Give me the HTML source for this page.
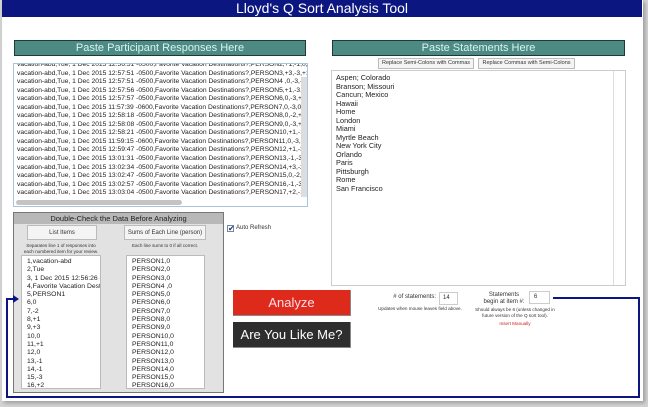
<!DOCTYPE html>
<html><head><meta charset="utf-8"><style>
*{margin:0;padding:0;box-sizing:border-box}
body{width:648px;height:407px;background:#d4d4d4;position:relative;overflow:hidden;font-family:"Liberation Sans",sans-serif}
.a{position:absolute}
.page{left:2px;top:0;width:641px;height:401px;background:#fff;box-shadow:2px 2px 4px #999}
.title{left:2px;top:0;width:640px;height:17px;background:#0c1680;color:#fff;font-size:14px;text-align:center;line-height:17px}
.hdr{background:#4e8a84;border:1px solid #1e3a36;color:#d8f4f0;font-size:11px;text-align:center;line-height:14px}
.ta{background:#fff;overflow:hidden}
.ln{font-size:6.7px;line-height:8.55px;white-space:nowrap;color:#222}
.st{font-size:7.3px;line-height:8.5px;color:#222}
.btn{background:#f4f4f4;border:1px solid #bbb;font-size:5.5px;text-align:center;color:#333}
.lst{font-size:6.8px;line-height:8.3px;color:#222;background:#fff;border:1px solid #bbb;overflow:hidden;padding:2px 0 0 5px;white-space:nowrap}
.sm{font-size:4.6px;color:#333;text-align:center;line-height:6px}
</style></head><body>
<div class="a page"></div>
<div class="a title">Lloyd's Q Sort Analysis Tool</div>

<div class="a hdr" style="left:14px;top:40px;width:292px;height:16px">Paste Participant Responses Here</div>
<div class="a ta" style="left:13px;top:63px;width:295px;height:144px;border:1px solid #a8c4de">
<div class="a ln" style="left:3px;top:-3px">vacation-abd,Tue, 1 Dec 2015 12:56:51 -0500,Favorite Vacation Destinations?,PERSON2,+1,-1,0,+<br>vacation-abd,Tue, 1 Dec 2015 12:57:51 -0500,Favorite Vacation Destinations?,PERSON3,+3,-3,+1<br>vacation-abd,Tue, 1 Dec 2015 12:57:51 -0500,Favorite Vacation Destinations?,PERSON4 ,0,-3,-1,+<br>vacation-abd,Tue, 1 Dec 2015 12:57:56 -0500,Favorite Vacation Destinations?,PERSON5,+1,-3,+3<br>vacation-abd,Tue, 1 Dec 2015 12:57:57 -0500,Favorite Vacation Destinations?,PERSON6,0,-3,+1,+<br>vacation-abd,Tue, 1 Dec 2015 11:57:39 -0600,Favorite Vacation Destinations?,PERSON7,0,-3,0,+2<br>vacation-abd,Tue, 1 Dec 2015 12:58:18 -0500,Favorite Vacation Destinations?,PERSON8,0,-2,+1,+<br>vacation-abd,Tue, 1 Dec 2015 12:58:08 -0500,Favorite Vacation Destinations?,PERSON9,0,-3,+2,+<br>vacation-abd,Tue, 1 Dec 2015 12:58:21 -0500,Favorite Vacation Destinations?,PERSON10,+1,-1,0<br>vacation-abd,Tue, 1 Dec 2015 11:59:15 -0600,Favorite Vacation Destinations?,PERSON11,0,-3,0,0<br>vacation-abd,Tue, 1 Dec 2015 12:59:47 -0500,Favorite Vacation Destinations?,PERSON12,+1,-3,0<br>vacation-abd,Tue, 1 Dec 2015 13:01:31 -0500,Favorite Vacation Destinations?,PERSON13,-1,-3,+<br>vacation-abd,Tue, 1 Dec 2015 13:02:34 -0500,Favorite Vacation Destinations?,PERSON14,+3,-2,0<br>vacation-abd,Tue, 1 Dec 2015 13:02:47 -0500,Favorite Vacation Destinations?,PERSON15,0,-2,+1<br>vacation-abd,Tue, 1 Dec 2015 13:02:57 -0500,Favorite Vacation Destinations?,PERSON16,-1,-3,+<br>vacation-abd,Tue, 1 Dec 2015 13:03:04 -0500,Favorite Vacation Destinations?,PERSON17,+2,-1,0</div>
<div class="a" style="left:287px;top:13px;width:6px;height:120px;background:#ddd"></div>
<div class="a" style="left:2px;top:136px;width:166px;height:5px;background:#c4c4c4;border-radius:3px"></div>
</div>

<div class="a hdr" style="left:332px;top:40px;width:293px;height:16px">Paste Statements Here</div>
<div class="a btn" style="left:378px;top:58px;width:96px;height:11px;line-height:9px">Replace Semi-Colons with Commas</div>
<div class="a btn" style="left:478px;top:58px;width:97px;height:11px;line-height:9px">Replace Commas with Semi-Colons</div>
<div class="a ta" style="left:331px;top:70px;width:295px;height:216px;border:1px solid #ccc">
<div class="a st" style="left:4px;top:3px">Aspen; Colorado<br>Branson; Missouri<br>Cancun; Mexico<br>Hawaii<br>Home<br>London<br>Miami<br>Myrtle Beach<br>New York City<br>Orlando<br>Paris<br>Pittsburgh<br>Rome<br>San Francisco</div>
<div class="a" style="left:281px;top:0;width:8px;height:214px;border-left:1px solid #ddd"></div>
</div>

<div class="a" style="left:13px;top:212px;width:211px;height:181px;background:#e2e2e2;border:1px solid #777"></div>
<div class="a" style="left:14px;top:213px;width:209px;height:11px;background:#b8b8b8;font-size:7.5px;text-align:center;line-height:11px;color:#222">Double-Check the Data Before Analyzing</div>
<div class="a btn" style="left:27px;top:225px;width:70px;height:15px;line-height:14px;font-size:6px">List Items</div>
<div class="a btn" style="left:124px;top:225px;width:82px;height:15px;line-height:14px;font-size:6px">Sums of Each Line (person)</div>
<div class="a sm" style="left:20px;top:243px;width:82px">Separates line 1 of responses into<br>each numbered item for your review.</div>
<div class="a sm" style="left:124px;top:243px;width:82px">Each line sums to 0 if all correct.</div>
<div class="a lst" style="left:21px;top:255px;width:80px;height:134px">1,vacation-abd<br>2,Tue<br>3, 1 Dec 2015 12:56:26 -0<br>4,Favorite Vacation Destir<br>5,PERSON1<br>6,0<br>7,-2<br>8,+1<br>9,+3<br>10,0<br>11,+1<br>12,0<br>13,-1<br>14,-1<br>15,-3<br>16,+2<br>17,-1</div>
<div class="a lst" style="left:126px;top:255px;width:79px;height:134px">PERSON1,0<br>PERSON2,0<br>PERSON3,0<br>PERSON4 ,0<br>PERSON5,0<br>PERSON6,0<br>PERSON7,0<br>PERSON8,0<br>PERSON9,0<br>PERSON10,0<br>PERSON11,0<br>PERSON12,0<br>PERSON13,0<br>PERSON14,0<br>PERSON15,0<br>PERSON16,0<br>PERSON17,0</div>

<div class="a" style="left:227px;top:225px;width:7px;height:7px;border:1px solid #789;background:#fff;font-size:8px;line-height:6px;color:#1a3a8a">✔</div>
<div class="a" style="left:236px;top:225px;font-size:6px;color:#333">Auto Refresh</div>

<div class="a" style="left:233px;top:290px;width:118px;height:26px;background:#dd2a1a;color:#fde;font-size:13px;text-align:center;line-height:26px;border-bottom:1px solid #888;border-right:1px solid #888">Analyze</div>
<div class="a" style="left:233px;top:322px;width:118px;height:26px;background:#2e2e2e;color:#fff;font-size:13px;text-align:center;line-height:26px;border-bottom:1px solid #888;border-right:1px solid #888">Are You Like Me?</div>

<div class="a" style="left:380px;top:294px;width:56px;font-size:6px;text-align:right;color:#333"># of statements:</div>
<div class="a" style="left:439px;top:292px;width:19px;height:13px;border:1px solid #ccc;font-size:6px;padding:2px 3px;color:#333">14</div>
<div class="a sm" style="left:370px;top:306px;width:100px">Updates when mouse leaves field above.</div>
<div class="a" style="left:480px;top:292px;width:48px;font-size:6px;text-align:center;line-height:7px;color:#333">Statements<br>begin at item #:</div>
<div class="a" style="left:529px;top:291px;width:21px;height:13px;border:1px solid #ccc;font-size:6px;padding:2px 4px;color:#333">6</div>
<div class="a sm" style="left:470px;top:307px;width:90px">Should always be 6 (unless changed in<br>future version of the Q sort tool).</div>
<div class="a sm" style="left:470px;top:321px;width:90px;color:#d02020">Insert Manually</div>

<svg class="a" style="left:0;top:0" width="648" height="407">
<polyline points="553,298 639,298 639,397 7,397 7,299 14,299" fill="none" stroke="#0c1680" stroke-width="2"/>
<polygon points="13,295 19,299 13,303" fill="#0c1680"/>
</svg>
</body></html>
